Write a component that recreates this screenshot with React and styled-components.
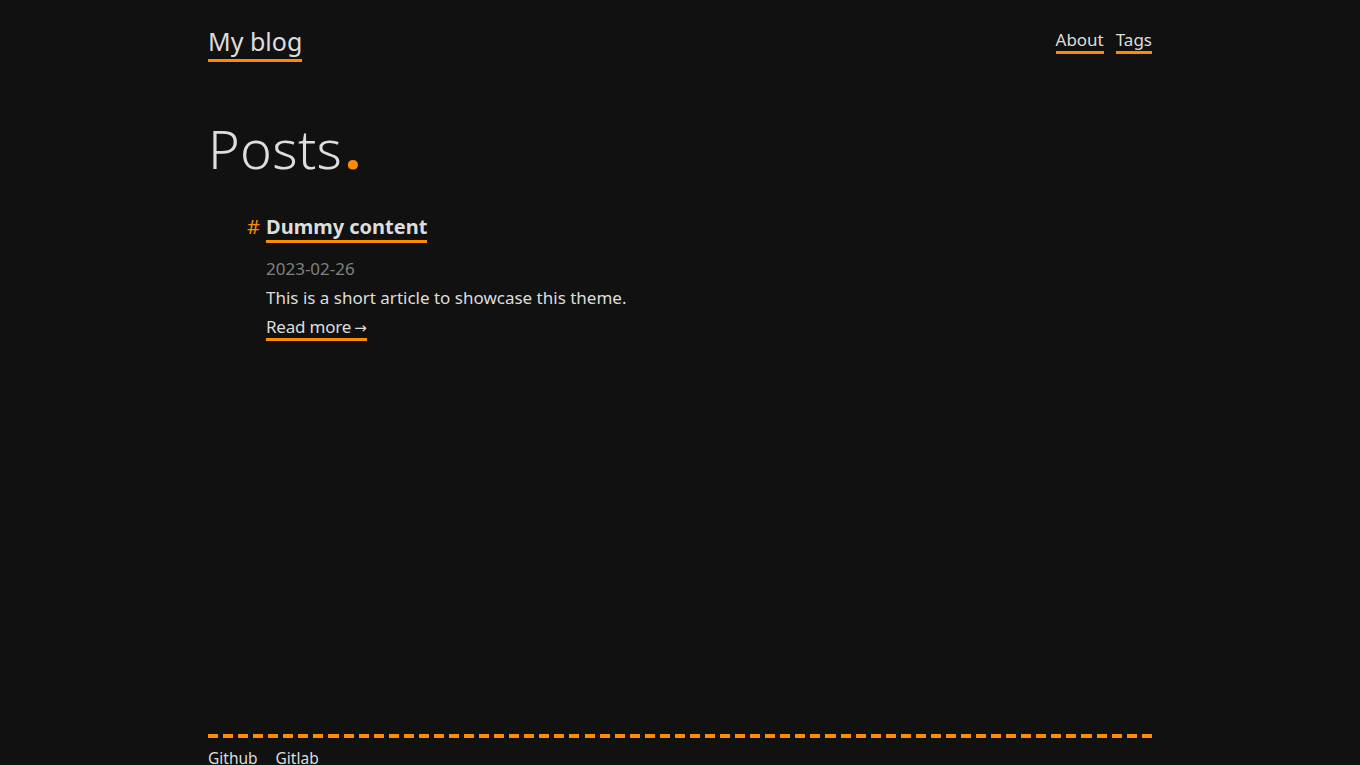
import React from 'react';
import styled, { createGlobalStyle } from 'styled-components';

const GlobalStyle = createGlobalStyle`
  html, body {
    margin: 0;
    padding: 0;
    background: #111111;
    color: #dddddd;
    font-family: "Noto Sans", "Open Sans", sans-serif;
  }
  * { box-sizing: border-box; }
`;

const accent = '#ff8c00';

const Page = styled.div`
  width: 944px;
  margin: 0 auto;
  min-height: calc(100vh + 20px);
  display: flex;
  flex-direction: column;
`;

const Header = styled.header`
  display: flex;
  justify-content: space-between;
  align-items: flex-start;
  padding-top: 24px;
`;

const Link = styled.a`
  color: #dddddd;
  text-decoration: none;
  border-bottom: 3px solid ${accent};
  cursor: pointer;
`;

const Brand = styled(Link)`
  font-size: 25px;
  line-height: 35px;
`;

const Nav = styled.nav`
  display: flex;
  gap: 12px;
  padding-top: 5px;
`;

const NavLink = styled(Link)`
  font-size: 17px;
  line-height: 22px;
`;

const Main = styled.main`
  flex: 1;
`;

const Title = styled.h1`
  font-size: 54px;
  font-weight: 300;
  margin: 59px 0 40px;
  line-height: 1;
  letter-spacing: 0.3px;
`;

const Dot = styled.span`
  color: ${accent};
  font-weight: 800;
  margin-left: 3px;
`;

const PostList = styled.ul`
  list-style: none;
  margin: 0;
  padding-left: 58px;
`;

const PostItem = styled.li`
  position: relative;
`;

const Hash = styled.span`
  position: absolute;
  left: -19px;
  top: 0;
  color: ${accent};
  font-size: 20px;
  line-height: 24px;
`;

const PostTitle = styled(Link)`
  font-size: 20px;
  font-weight: 700;
  line-height: 24px;
`;

const PostDate = styled.div`
  color: #808080;
  font-size: 17px;
  margin-top: 15px;
  line-height: 29px;
`;

const PostSummary = styled.p`
  margin: 0;
  font-size: 17px;
  line-height: 29px;
`;

const MoreRow = styled.div`
  line-height: 29px;
`;

const ReadMore = styled(Link)`
  font-size: 17px;
  letter-spacing: -0.2px;
`;

const Arrow = styled.span`
  font-family: "DejaVu Sans", sans-serif;
  font-size: 15px;
  margin-left: 3px;
`;

const Footer = styled.footer`
  padding: 14px 0 16px;
  background-image: repeating-linear-gradient(
    to right,
    ${accent} 0,
    ${accent} 10.04px,
    transparent 10.04px,
    transparent 15.06px
  );
  background-size: 100% 4px;
  background-repeat: no-repeat;
  background-position: top left;
  display: flex;
  gap: 18px;
  font-size: 15.5px;
  line-height: 21px;
`;

const FooterLink = styled.a`
  color: #dddddd;
  text-decoration: none;
`;

export default function App() {
  return (
    <>
      <GlobalStyle />
      <Page>
        <Header>
          <Brand>My blog</Brand>
          <Nav>
            <NavLink>About</NavLink>
            <NavLink>Tags</NavLink>
          </Nav>
        </Header>
        <Main>
          <Title>
            Posts<Dot>.</Dot>
          </Title>
          <PostList>
            <PostItem>
              <Hash>#</Hash>
              <PostTitle>Dummy content</PostTitle>
              <PostDate>2023-02-26</PostDate>
              <PostSummary>This is a short article to showcase this theme.</PostSummary>
              <MoreRow>
                <ReadMore>
                  Read more<Arrow>→</Arrow>
                </ReadMore>
              </MoreRow>
            </PostItem>
          </PostList>
        </Main>
        <Footer>
          <FooterLink>Github</FooterLink>
          <FooterLink>Gitlab</FooterLink>
        </Footer>
      </Page>
    </>
  );
}
